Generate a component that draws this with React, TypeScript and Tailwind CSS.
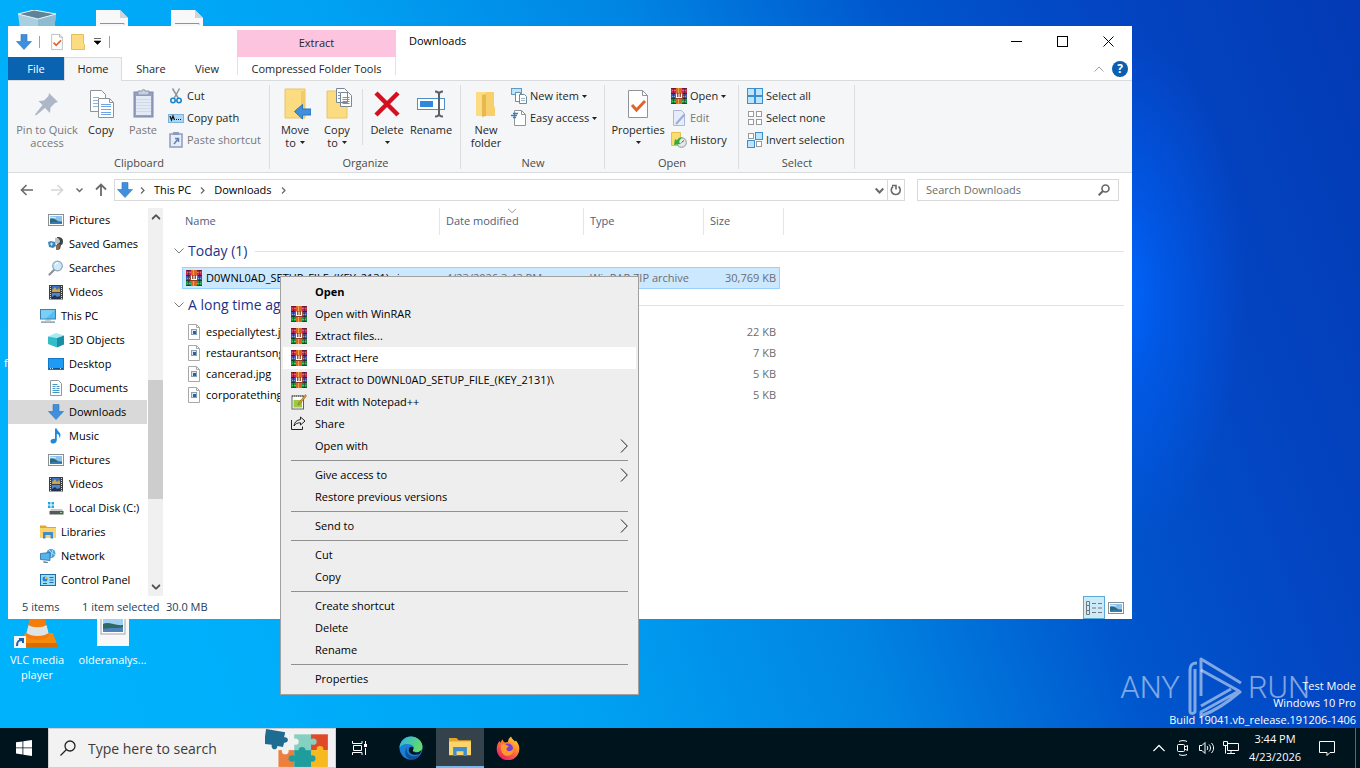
import { ReactNode } from "react";

type IconProps = { className?: string };

/* ---------- shared icons ---------- */

const WinRar = () => (
  <svg width="16" height="16" viewBox="0 0 16 16" className="shrink-0">
    <rect y="0" width="16" height="5" fill="#c42a4e" />
    <rect y="0" width="16" height="1" fill="#7d1431" />
    <rect x="1" y="2" width="14" height="1" fill="#e8607c" />
    <rect y="5" width="16" height="6" fill="#4a4fb5" />
    <rect y="5" width="16" height="1" fill="#26205f" />
    <rect x="1" y="8" width="14" height="1" fill="#8e9be6" />
    <rect y="11" width="16" height="5" fill="#159a3e" />
    <rect y="10" width="16" height="1" fill="#14431f" />
    <rect x="1" y="13" width="14" height="1" fill="#54c46a" />
    <rect y="15" width="16" height="1" fill="#0b5a22" />
    <rect x="2" width="1" height="16" fill="#3a2340" opacity=".6" />
    <rect x="13" width="1" height="16" fill="#3a2340" opacity=".6" />
    <rect x="5" width="6" height="16" fill="#d9661f" />
    <rect x="7" width="1" height="16" fill="#f2a24e" />
    <rect x="4" y="5" width="8" height="6" fill="#8a3b2b" />
    <path d="M5.500 5.500v4h5v-4M8 5.500v4" fill="none" stroke="#fff" strokeWidth="1.200" />
  </svg>
);

const DownArrow = ({ className = "size-4" }: IconProps) => (
  <svg viewBox="0 0 16 16" className={"shrink-0 " + className}>
    <path d="M5 0.500h6v7h4.500L8 15.500 0.500 7.500H5z" fill="#3f8fdc" stroke="#2b74bd" strokeWidth=".6" />
  </svg>
);

const PictureIcon = () => (
  <svg width="16" height="16" viewBox="0 0 16 16" className="shrink-0">
    <rect x=".5" y="2.500" width="15" height="11" fill="#fff" stroke="#8a8f94" />
    <rect x="2" y="4" width="12" height="8" fill="#8cc3ee" />
    <path d="M2 7c3-1 5 0 7 1.500s4 1 5 1V12H2z" fill="#2d6b6f" />
    <path d="M2 10.500c4-1 8-.5 12 .3V12H2z" fill="#3c79c2" />
    <path d="M2 5.500c2-1 4 .5 6 .2" stroke="#e8f4fd" fill="none" />
  </svg>
);

const GamesIcon = () => (
  <svg width="16" height="16" viewBox="0 0 16 16" className="shrink-0">
    <path d="M9 1c3-.5 6 1 6 4s-1 4-2 4l-1 4-3 1V9z" fill="#39434b" />
    <path d="M7 2c3-1 5 1 5 4l-2 2-3-1z" fill="#b8c2c9" />
    <path d="M8 9l4-1-1 6H8z" fill="#8b6a4e" />
    <path d="M0 6l3-1 4 1 1 4-3 2-4-1z" fill="#3b87bd" />
    <path d="M2 8h3M3.500 6.500v3" stroke="#cfe8f8" />
  </svg>
);

const GlassIcon = () => (
  <svg width="16" height="16" viewBox="0 0 16 16" className="shrink-0">
    <path d="M6.500 9.500L1.500 14.500" stroke="#8b9299" strokeWidth="2.200" strokeLinecap="round" />
    <circle cx="9.500" cy="6" r="4.800" fill="#cfe9f9" stroke="#8ba6b8" strokeWidth="1.200" />
    <path d="M7 5a3 3 0 0 1 3-2.200" stroke="#fff" fill="none" />
  </svg>
);

const VideoIcon = () => (
  <svg width="16" height="16" viewBox="0 0 16 16" className="shrink-0">
    <rect x="1" y="1" width="14" height="14.500" fill="#3d3f42" />
    <path d="M2.500 2v13M13.500 2v13" stroke="#d8dadc" strokeDasharray="1 1" />
    <rect x="4" y="2" width="8" height="6" fill="#3a6fc0" />
    <path d="M4 6l3-3 2 3 2-2 1 2v2H4z" fill="#caa64a" />
    <rect x="4" y="9" width="8" height="6" fill="#4f86cf" />
    <path d="M4 13l3-2 2 2 3-1v3H4z" fill="#20324f" />
  </svg>
);

const PcIcon = () => (
  <svg width="16" height="16" viewBox="0 0 16 16" className="shrink-0">
    <rect x=".5" y="1.500" width="15" height="9.500" fill="#55bdf2" stroke="#3d7fae" />
    <path d="M1 2h14L6 10.500H1z" fill="#8bd7fa" opacity=".7" />
    <rect x="5" y="11.500" width="6" height="1" fill="#8fa4b2" />
    <rect x="1" y="13.500" width="14" height="1.200" fill="#6f8797" />
  </svg>
);

const CubeIcon = () => (
  <svg width="16" height="16" viewBox="0 0 16 16" className="shrink-0">
    <path d="M0 4.500L8 1l8 2.500L9 6z" fill="#a4ecf2" />
    <path d="M0 4.500L9 6v9.500L0 12z" fill="#33bcc9" />
    <path d="M16 3.500L9 6v9.500l7-3z" fill="#1a8fa3" />
  </svg>
);

const DesktopIcon = () => (
  <svg width="16" height="16" viewBox="0 0 16 16" className="shrink-0">
    <rect x=".5" y="2.500" width="15" height="11" fill="#1e9bf5" stroke="#1277c9" />
    <rect x="1" y="12" width="14" height="1" fill="#0b4f94" />
    <path d="M2 12.500h3M12 12.500h2" stroke="#cfe6fb" strokeDasharray="1 1" />
  </svg>
);

const DocIcon = () => (
  <svg width="16" height="16" viewBox="0 0 16 16" className="shrink-0">
    <path d="M2.500 .5h8l3 3v12h-11z" fill="#fff" stroke="#8f979d" />
    <path d="M4.500 4.500h5M4.500 6.500h7M4.500 8.500h7M4.500 10.500h7M4.500 12.500h7" stroke="#4196c4" />
    <path d="M8 6v4" stroke="#fff" />
  </svg>
);

const MusicIcon = () => (
  <svg width="16" height="16" viewBox="0 0 16 16" className="shrink-0">
    <path d="M7 .5h1.800c.4 3 3.700 3.500 3.700 6.500 0 1.500-.7 2.500-1.300 3 .6-2.500-.8-3.800-2.400-4.200V12c0 2-1.500 3.500-3.300 3.500S2.500 14.600 2.500 13.200 4 10.500 7 10.700z" fill="#1e88dd" />
  </svg>
);

const DiskIcon = () => (
  <svg width="16" height="16" viewBox="0 0 16 16" className="shrink-0">
    <path d="M0 2h2.500v2.500H0zM3.500 2H6v2.500H3.500zM0 5.500h2.500V8H0zM3.500 5.500H6V8H3.500z" fill="#20a8e0" />
    <path d="M3 9h11l1 2H2z" fill="#c3c8cc" />
    <rect x="1.500" y="11" width="14" height="3.500" fill="#54595d" />
    <rect x="12" y="12" width="2" height="1" fill="#8be36c" />
  </svg>
);

const LibraryIcon = ({ className = "size-4" }: IconProps) => (
  <svg viewBox="0 0 16 16" className={"shrink-0 " + className}>
    <path d="M0 1.500h5.500l1.500 1.500h9v3H0z" fill="#e5a52c" />
    <path d="M0 4h16v10H0z" fill="#fbd56b" />
    <path d="M3 8h10v6.500h-2.500V11h-5v3.500H3z" fill="#3f8dcf" />
  </svg>
);

const NetworkIcon = () => (
  <svg width="16" height="16" viewBox="0 0 16 16" className="shrink-0">
    <circle cx="11" cy="5.500" r="4.500" fill="#4fa3d6" />
    <path d="M9 2l3 3-1 4M13 2l-1 3 3 2" stroke="#a8dcf5" fill="none" />
    <path d="M.5 5.500l9.500-1v8l-9.500-1z" fill="#56b4ec" stroke="#2a6fa3" strokeWidth=".8" />
    <path d="M3 13l5 1v1H4z" fill="#6e8999" />
  </svg>
);

const ControlIcon = () => (
  <svg width="16" height="16" viewBox="0 0 16 16" className="shrink-0">
    <rect x=".5" y="2.500" width="15" height="11" fill="#9bdcfb" stroke="#1f6ea8" />
    <circle cx="5" cy="7" r="2.500" fill="#1f8bd0" />
    <path d="M5 7V4.500A2.500 2.500 0 0 1 7.500 7z" fill="#f7b733" />
    <path d="M9.500 5.500h4M9.500 8h4M9.500 10.500h4M3 11.500h4" stroke="#1a6fae" />
  </svg>
);

const FileIcon = () => (
  <svg width="16" height="16" viewBox="0 0 16 16" className="shrink-0">
    <path d="M2.500 .5h8l3 3v12h-11z" fill="#fff" stroke="#a8a8a8" />
    <path d="M10.500 .5v3h3" fill="none" stroke="#a8a8a8" />
    <rect x="5.500" y="5.500" width="5" height="5" fill="#dbe9f4" stroke="#8aa0b3" />
    <path d="M7 7h3v3H7z" fill="#2f6296" />
  </svg>
);

const NotepadIcon = () => (
  <svg width="16" height="16" viewBox="0 0 16 16" className="shrink-0">
    <rect x="1" y="2" width="11.500" height="13" fill="#fff" stroke="#5d6259" />
    <path d="M1 2h11" stroke="#444" strokeDasharray="1 1" />
    <rect x="2.500" y="6" width="8.500" height="7.500" fill="#98cc3c" />
    <path d="M14.500 0.500L7.500 9l-.5 2 2-1 6.500-8z" fill="#e49b2f" stroke="#7a5320" strokeWidth=".5" />
  </svg>
);

const ShareIcon = () => (
  <svg width="16" height="16" viewBox="0 0 16 16" className="shrink-0" fill="none" stroke="#222">
    <path d="M.5 4v9.500h11v-3" />
    <path d="M9.500 1L14 5l-4.500 4V6.800C6.500 6.800 4.500 7.500 3 10c.3-3.500 2.500-6 6.500-6.500z" />
  </svg>
);

const Caret = () => (
  <svg width="5" height="3" viewBox="0 0 5 3" className="shrink-0">
    <path d="M0 0h5L2.500 3z" fill="#222" />
  </svg>
);

const Chevron = ({ className = "" }: IconProps) => (
  <svg width="10" height="6" viewBox="0 0 10 6" className={"shrink-0 " + className} fill="none" stroke="currentColor">
    <path d="M0.500 0.500L5 5l4.500-4.500" />
  </svg>
);

/* ---------- ribbon icons ---------- */

const PinIcon = () => (
  <svg width="32" height="32" viewBox="0 0 32 32">
    <path d="M18 5l9 9-3 1-4.500 4.500-.5 5.500-5-5L5 27.500l-1-1L11.500 17l-4-4 5.500-.5L17.500 8z" fill="#aeb7c8" />
  </svg>
);

const CopyIcon = () => (
  <svg width="32" height="32" viewBox="0 0 32 32" fill="#fff" stroke="#8b929b">
    <path d="M5.500 2.500h11l4 4v17h-15z" />
    <path d="M8 9.500h6M8 12.500h6M8 15.500h6M8 18.500h5" stroke="#86b3ea" />
    <path d="M13.500 10.500h11l4 4v15h-15z" />
    <path d="M24.500 10.500v4h4" fill="none" />
    <path d="M16 16.500h10M16 18.500h10M16 21.500h10M16 24.500h10M16 26.500h10" stroke="#6fa3e6" />
  </svg>
);

const PasteIcon = () => (
  <svg width="32" height="32" viewBox="0 0 32 32">
    <rect x="7" y="4" width="19" height="25" fill="#94a2be" stroke="#7d8bab" />
    <rect x="9" y="8" width="15" height="19" fill="#e3e9f5" />
    <path d="M9 11.500h15M9 14.500h15M9 17.500h15M9 20.500h15M9 23.500h15" stroke="#d0d9ec" />
    <path d="M11 3h4a1.500 1.500 0 0 1 3 0h4v4H11z" fill="#c6cfdf" stroke="#8996b2" />
  </svg>
);

const MoveToIcon = () => (
  <svg width="32" height="32" viewBox="0 0 32 32">
    <path d="M6 1h16l4 0v29H6z" fill="#fbdc81" stroke="#e9c466" />
    <path d="M22 3h4v27h-4z" fill="#f3ca65" />
    <path d="M15.500 23.500l8-7v4.500H32v6h-8.500v4z" fill="#3f8fdc" stroke="#2b74bd" />
  </svg>
);

const CopyToIcon = () => (
  <svg width="32" height="32" viewBox="0 0 32 32">
    <path d="M6 3h20v27H6z" fill="#fbdc81" stroke="#e9c466" />
    <path d="M15.500 .5h8l3 3v11h-11zM19.500 4.500h8l3 3v11h-11z" fill="#fff" stroke="#7d8790" />
    <path d="M21.500 9.500h7M21.500 11.500h7M21.500 13.500h7M21.500 15.500h7M17 4.500h2M17 7.500h2M17 10.500h2" stroke="#5e97e0" />
  </svg>
);

const DeleteIcon = () => (
  <svg width="32" height="32" viewBox="0 0 32 32" fill="none">
    <path d="M5 5l22 22M27 5L5 27" stroke="#d40f1f" strokeWidth="4.500" />
  </svg>
);

const RenameIcon = () => (
  <svg width="32" height="32" viewBox="0 0 32 32" fill="none">
    <rect x="2.500" y="10.500" width="27" height="11" fill="#fff" stroke="#4f8fc7" />
    <rect x="5" y="13" width="13" height="6" fill="#2f87de" />
    <path d="M20 3.500c3 0 4 1 4 3v19c0 2-1 3-4 3M28 3.500c-3 0-4 1-4 3v19c0 2 1 3 4 3" stroke="#5c6166" strokeWidth="2" />
  </svg>
);

const NewFolderIcon = () => (
  <svg width="32" height="32" viewBox="0 0 32 32">
    <path d="M6 4h17v24H6z" fill="#fbdc81" />
    <path d="M12 7l4-1v22l-4 1z" fill="#e6b850" />
    <path d="M16 4h8v14l1 2v8h-9z" fill="#f7d06c" />
  </svg>
);

const PropertiesIcon = ({ className = "size-8" }: IconProps) => (
  <svg viewBox="0 0 32 32" className={className} fill="none">
    <path d="M6.500 2.500h14l5 5v22h-19z" fill="#fff" stroke="#8f9498" />
    <path d="M20.500 2.500v5h5" stroke="#8f9498" />
    <path d="M10 17l4.500 5L23 13" stroke="#e0652a" strokeWidth="3" />
  </svg>
);

const CutIcon = () => (
  <svg width="16" height="16" viewBox="0 0 16 16" fill="none">
    <path d="M4.500 .5l6 10M11.500 .5l-5.500 10" stroke="#8c969e" strokeWidth="1.500" />
    <circle cx="5" cy="12.500" r="2.200" stroke="#1c86c9" strokeWidth="1.600" />
    <circle cx="11" cy="12.500" r="2.200" stroke="#1c86c9" strokeWidth="1.600" />
  </svg>
);

const CopyPathIcon = () => (
  <svg width="16" height="16" viewBox="0 0 16 16" fill="none">
    <rect x=".5" y="4.500" width="15" height="8" fill="#a9d7f7" stroke="#7fb2d9" />
    <path d="M2 6l1.500 4L5 6l1.500 4" stroke="#111" strokeWidth="1.200" />
    <path d="M8 9.500h6" stroke="#111" strokeDasharray="1 1" />
  </svg>
);

const PasteShortcutIcon = () => (
  <svg width="16" height="16" viewBox="0 0 16 16" fill="none">
    <rect x="2" y="2" width="12" height="13" fill="#e7ecf6" stroke="#8d9cbc" strokeWidth="1.500" />
    <rect x="5" y="0" width="6" height="3" fill="#8d9cbc" />
    <path d="M6 12l4-5M7 6.500h3.500V10" stroke="#6381b8" strokeWidth="1.500" />
  </svg>
);

const NewItemIcon = () => (
  <svg width="16" height="16" viewBox="0 0 16 16" fill="#fff" stroke="#6e8a9e">
    <rect x=".5" y=".5" width="10" height="6" fill="#bfe3f8" stroke="#5d9cc4" />
    <path d="M4.500 4.500h5v9h-5z" />
    <path d="M8.500 6.500h5l2 2v7h-7z" />
    <path d="M10 10.500h4M10 12.500h4" stroke="#9db6c7" />
  </svg>
);

const EasyAccessIcon = () => (
  <svg width="16" height="16" viewBox="0 0 16 16" fill="none">
    <path d="M3.500 .5h7l4 4v11h-11z" fill="#fff" stroke="#8f9498" />
    <path d="M10.500 .5v4h4" stroke="#8f9498" />
    <path d="M2 3.500h5M0 5.500h6M2 7.500h3" stroke="#2f7fc4" strokeWidth="1.300" />
  </svg>
);

const EditIcon = () => (
  <svg width="16" height="16" viewBox="0 0 16 16" fill="none">
    <path d="M2.500 .5h8l3 3v12h-11z" fill="#e6edfa" stroke="#aab9da" />
    <path d="M5 14l8.500-9.500" stroke="#9fb0d6" strokeWidth="2.200" />
  </svg>
);

const HistoryIcon = () => (
  <svg width="16" height="16" viewBox="0 0 16 16" fill="none">
    <path d="M.5 .5h9v13h-9z" fill="#fbdc6e" stroke="#e4bf4e" />
    <circle cx="10.500" cy="10.500" r="4.800" fill="#e5e9ea" stroke="#8b9397" />
    <path d="M10.500 10.500l2.500-2" stroke="#555" />
    <path d="M3 13l1-6 2 1.500C7.500 6 10 5.500 11.500 6 8.500 7 8 9 8.500 11l2 .8z" fill="#2fae3c" />
  </svg>
);

const tile = (x: number, y: number, on: boolean) => (
  <rect
    key={x + "-" + y}
    x={x}
    y={y}
    width={on ? 7 : 5}
    height={on ? 7 : 5}
    fill={on ? "#bfe5fc" : "#fff"}
    stroke={on ? "#3a8fd0" : "#9a9a9a"}
  />
);

const SelectAllIcon = () => (
  <svg width="16" height="16" viewBox="0 0 16 16">
    {tile(0.5, 0.5, true)}
    {tile(8.5, 0.5, true)}
    {tile(0.5, 8.5, true)}
    {tile(8.5, 8.5, true)}
  </svg>
);
const SelectNoneIcon = () => (
  <svg width="16" height="16" viewBox="0 0 16 16">
    {tile(1.5, 1.5, false)}
    {tile(9.5, 1.5, false)}
    {tile(1.5, 9.5, false)}
    {tile(9.5, 9.5, false)}
  </svg>
);
const InvertIcon = () => (
  <svg width="16" height="16" viewBox="0 0 16 16">
    {tile(1.5, 1.5, false)}
    {tile(8.5, 0.5, true)}
    {tile(0.5, 8.5, true)}
    {tile(9.5, 9.5, false)}
  </svg>
);

/* ---------- ribbon parts ---------- */

function BigButton({ icon, lines, caret, dim, className }: { icon: ReactNode; lines: string[]; caret?: boolean; dim?: boolean; className: string }) {
  return (
    <button className={"flex flex-col items-center gap-[3px] pt-[7px] leading-[13px] " + (dim ? "text-[#777] " : "text-[#262626] ") + className}>
      {icon}
      <span className="flex flex-col items-center whitespace-nowrap">
        {lines.map((line, i) => (
          <span key={line} className="flex items-center gap-1">
            {line}
            {caret && i > 0 && <Caret />}
          </span>
        ))}
        {caret && lines.length === 1 && (
          <span className="flex h-3 items-center">
            <Caret />
          </span>
        )}
      </span>
    </button>
  );
}

function SmallButton({ icon, label, caret, dim }: { icon: ReactNode; label: string; caret?: boolean; dim?: boolean }) {
  return (
    <button className={"flex h-[22px] items-center gap-[3px] whitespace-nowrap " + (dim ? "text-[#777]" : "text-[#262626]")}>
      {icon}
      <span>{label}</span>
      {caret && <Caret />}
    </button>
  );
}

function Group({ label, className, children }: { label: string; className: string; children: ReactNode }) {
  return (
    <section className={"relative flex shrink-0 flex-col px-1 " + className}>
      <div className="flex h-[73px] items-start">{children}</div>
      <h2 className="text-center leading-[18px] text-[#4a4a4a]">{label}</h2>
      <span className="absolute top-1 right-0 h-[84px] w-px bg-[#dcdddf]" />
    </section>
  );
}

function Ribbon() {
  return (
    <div className="flex h-[93px] shrink-0 overflow-hidden border-y border-[#dadbdc] bg-[#f5f6f7]">
      <Group label="Clipboard" className="w-[262px]">
        <BigButton icon={<PinIcon />} lines={["Pin to Quick", "access"]} dim className="ml-[2px] w-[66px]" />
        <BigButton icon={<CopyIcon />} lines={["Copy"]} className="w-[42px]" />
        <BigButton icon={<PasteIcon />} lines={["Paste"]} dim className="w-[42px]" />
        <div className="flex flex-col pt-1 pl-1">
          <SmallButton icon={<CutIcon />} label="Cut" />
          <SmallButton icon={<CopyPathIcon />} label="Copy path" />
          <SmallButton icon={<PasteShortcutIcon />} label="Paste shortcut" dim />
        </div>
      </Group>
      <Group label="Organize" className="w-[191px]">
        <BigButton icon={<MoveToIcon />} lines={["Move", "to"]} caret className="w-[42px]" />
        <BigButton icon={<CopyToIcon />} lines={["Copy", "to"]} caret className="w-[42px]" />
        <span className="mr-[3px] ml-1 mt-2 h-[56px] w-px bg-[#dcdddf]" />
        <BigButton icon={<DeleteIcon />} lines={["Delete"]} caret className="w-[42px]" />
        <BigButton icon={<RenameIcon />} lines={["Rename"]} className="w-[46px]" />
      </Group>
      <Group label="New" className="w-[144px]">
        <BigButton icon={<NewFolderIcon />} lines={["New", "folder"]} className="w-[42px]" />
        <div className="flex flex-col pt-1 pl-1">
          <SmallButton icon={<NewItemIcon />} label="New item" caret />
          <SmallButton icon={<EasyAccessIcon />} label="Easy access" caret />
        </div>
      </Group>
      <Group label="Open" className="w-[134px]">
        <BigButton icon={<PropertiesIcon />} lines={["Properties"]} caret className="w-[58px]" />
        <div className="flex flex-col pt-1 pl-1">
          <SmallButton icon={<WinRar />} label="Open" caret />
          <SmallButton icon={<EditIcon />} label="Edit" dim />
          <SmallButton icon={<HistoryIcon />} label="History" />
        </div>
      </Group>
      <Group label="Select" className="w-[116px]">
        <div className="flex flex-col pt-1 pl-1">
          <SmallButton icon={<SelectAllIcon />} label="Select all" />
          <SmallButton icon={<SelectNoneIcon />} label="Select none" />
          <SmallButton icon={<InvertIcon />} label="Invert selection" />
        </div>
      </Group>
    </div>
  );
}

function Header() {
  return (
    <header className="relative z-10 -mb-px flex h-[55px] shrink-0">
      <div className="flex w-[229px] shrink-0 flex-col">
        <div className="flex h-[31px] items-center pl-2 text-gray-500">
          <DownArrow />
          <span className="ml-[7px] h-3 w-px bg-gray-400" />
          <button aria-label="Properties" className="ml-2">
            <PropertiesIcon className="size-[18px]" />
          </button>
          <button aria-label="New folder" className="ml-1">
            <svg width="16" height="16" viewBox="0 0 16 16">
              <path d="M1.500 .5h12v9l1 1v5h-13z" fill="#fbdc81" stroke="#e3be5a" />
            </svg>
          </button>
          <button aria-label="Customize Quick Access Toolbar" className="ml-1 p-1 text-black">
            <svg width="7" height="7" viewBox="0 0 7 7">
              <path d="M0 .5h7M0 3h7L3.500 6.500z" fill="#000" stroke="#000" strokeWidth=".6" />
            </svg>
          </button>
          <span className="ml-1 h-3 w-px bg-gray-400" />
        </div>
        <nav className="flex h-6 text-[#262626]">
          <button className="mb-px w-14 bg-[#0a63b1] pt-px text-white">File</button>
          <button className="w-[58px] border-x border-t border-[#dadbdc] bg-[#f5f6f7]">Home</button>
          <button className="w-[58px]">Share</button>
          <button className="w-[54px]">View</button>
        </nav>
      </div>
      <div className="flex w-[159px] shrink-0 flex-col pt-1 text-[#262626]">
        <div className="flex h-[27px] items-center justify-center bg-[#fcc4de]">Extract</div>
        <button className="h-[18px] border-x border-[#e3e3e3] pt-[5px] leading-[14px]">Compressed Folder Tools</button>
      </div>
      <div className="flex flex-1 flex-col">
        <div className="flex h-[31px] items-center pr-px">
          <h1 className="flex-1 pl-[13px]">Downloads</h1>
          <button aria-label="Minimize" className="flex w-[46px] justify-center">
            <svg width="11" height="11" stroke="#000">
              <path d="M0 5.500h11" />
            </svg>
          </button>
          <button aria-label="Maximize" className="flex w-[46px] justify-center">
            <svg width="11" height="11" fill="none" stroke="#000">
              <rect x=".5" y=".5" width="10" height="10" />
            </svg>
          </button>
          <button aria-label="Close" className="flex w-[46px] justify-center">
            <svg width="11" height="11" stroke="#000">
              <path d="M.5 .5l10 10M10.500 .5l-10 10" />
            </svg>
          </button>
        </div>
        <div className="flex h-[23px] items-center justify-end gap-2 pr-1">
          <button aria-label="Minimize the Ribbon" className="text-[#a0a0a0]">
            <Chevron className="rotate-180" />
          </button>
          <button aria-label="Help" className="flex size-4 items-center justify-center rounded-full bg-[#0a5fb0] text-[12px] leading-none font-bold text-white">
            ?
          </button>
        </div>
      </div>
    </header>
  );
}

const Crumb = () => (
  <svg width="5" height="7" viewBox="0 0 5 7" fill="none" stroke="#666" strokeWidth="1.200" className="shrink-0">
    <path d="M1 .5l3 3-3 3" />
  </svg>
);

function AddressBar() {
  return (
    <div className="flex shrink-0 items-center pt-[6px] pr-[13px] pb-[7px] pl-3">
      <div className="flex w-[94px] shrink-0 items-center text-[#6a6a6a]">
        <button aria-label="Back">
          <svg width="14" height="12" viewBox="0 0 14 12" fill="none" stroke="currentColor" strokeWidth="1.600">
            <path d="M13 6H2M6.500 1L1.500 6l5 5" />
          </svg>
        </button>
        <button aria-label="Forward" className="ml-4 text-[#d6d6d6]">
          <svg width="14" height="12" viewBox="0 0 14 12" fill="none" stroke="currentColor" strokeWidth="1.600">
            <path d="M1 6h11M7.500 1l5 5-5 5" />
          </svg>
        </button>
        <button aria-label="Recent locations" className="ml-3">
          <svg width="7" height="5" viewBox="0 0 7 5" fill="none" stroke="currentColor" strokeWidth="1.500">
            <path d="M.5 .5l3 3 3-3" />
          </svg>
        </button>
        <button aria-label="Up" className="ml-3">
          <svg width="12" height="14" viewBox="0 0 12 14" fill="none" stroke="currentColor" strokeWidth="1.800">
            <path d="M6 13V2M1 6.500l5-5 5 5" />
          </svg>
        </button>
      </div>
      <div className="flex h-[22px] flex-1 items-center border border-[#d9d9d9] pl-[2px]">
        <DownArrow />
        <div className="flex flex-1 items-center gap-[9px] pl-[7px] text-black">
          <Crumb />
          <button>This PC</button>
          <Crumb />
          <button>Downloads</button>
          <Crumb />
        </div>
        <button aria-label="Previous locations" className="px-[3px] text-[#6a6a6a]">
          <svg width="9" height="7" viewBox="0 0 9 7" fill="none" stroke="currentColor" strokeWidth="2">
            <path d="M.7 1.500l3.800 4 3.800-4" />
          </svg>
        </button>
        <button aria-label="Refresh" className="flex h-full w-[17px] items-center justify-center border-l border-[#d9d9d9] text-[#6a6a6a]">
          <svg width="12" height="12" viewBox="0 0 12 12" fill="none" stroke="currentColor" strokeWidth="1.600">
            <path d="M3 2.500A4.500 4.500 0 1 0 8.500 2.500" />
            <path d="M2 1.500h4v4" />
          </svg>
        </button>
      </div>
      <label className="ml-3 flex h-[22px] w-[202px] items-center border border-[#d9d9d9] pr-2 pl-2">
        <input type="text" aria-label="Search Downloads" placeholder="Search Downloads" className="w-0 flex-1 outline-none placeholder:text-[#6d6d6d]" />
        <svg width="12" height="12" viewBox="0 0 12 12" fill="none" stroke="#666" strokeWidth="1.600">
          <circle cx="7.500" cy="4.500" r="3.500" />
          <path d="M5 7L.7 11.300" strokeWidth="2" />
        </svg>
      </label>
    </div>
  );
}

const tree: { label: string; icon: ReactNode; top?: boolean; active?: boolean }[] = [
  { label: "Pictures", icon: <PictureIcon /> },
  { label: "Saved Games", icon: <GamesIcon /> },
  { label: "Searches", icon: <GlassIcon /> },
  { label: "Videos", icon: <VideoIcon /> },
  { label: "This PC", icon: <PcIcon />, top: true },
  { label: "3D Objects", icon: <CubeIcon /> },
  { label: "Desktop", icon: <DesktopIcon /> },
  { label: "Documents", icon: <DocIcon /> },
  { label: "Downloads", icon: <DownArrow />, active: true },
  { label: "Music", icon: <MusicIcon /> },
  { label: "Pictures", icon: <PictureIcon /> },
  { label: "Videos", icon: <VideoIcon /> },
  { label: "Local Disk (C:)", icon: <DiskIcon /> },
  { label: "Libraries", icon: <LibraryIcon />, top: true },
  { label: "Network", icon: <NetworkIcon />, top: true },
  { label: "Control Panel", icon: <ControlIcon />, top: true },
];

function Sidebar() {
  return (
    <aside className="flex shrink-0">
      <ul className="w-[139px]">
        {tree.map((item, i) => (
          <li key={i}>
            <button
              className={
                "flex h-6 w-full items-center gap-[5px] whitespace-nowrap text-black " +
                (item.top ? "pl-8 " : "pl-10 ") +
                (item.active ? "bg-[#d9d9d9]" : "")
              }
            >
              {item.icon}
              {item.label}
            </button>
          </li>
        ))}
      </ul>
      <div className="ml-px flex w-[15px] flex-col items-center bg-[#f0f0f0] py-[6px] text-[#505050]">
        <Chevron className="scale-90 rotate-180 stroke-2" />
        <div className="mt-40 h-[119px] w-full bg-[#cdcdcd]" />
        <Chevron className="mt-auto scale-90 stroke-2" />
      </div>
    </aside>
  );
}

const oldFiles = [
  { name: "especiallytest.jpg", size: "22 KB" },
  { name: "restaurantsong.jpg", size: "7 KB" },
  { name: "cancerad.jpg", size: "5 KB" },
  { name: "corporatething.jpg", size: "5 KB" },
];

function GroupRow({ label }: { label: string }) {
  return (
    <tr className="h-8">
      <td colSpan={7}>
        <div className="flex items-center gap-2 pr-2 pl-[11px]">
          <Chevron className="text-[#777]" />
          <span className="-ml-1 text-[14px] leading-5 text-[#1e3287]">{label}</span>
          <span className="h-px flex-1 bg-[#e2e2e2]" />
        </div>
      </td>
    </tr>
  );
}

function FileTable() {
  return (
    <div className="min-w-0 flex-1">
      <table className="w-full table-fixed border-separate border-spacing-0 text-left whitespace-nowrap">
        <colgroup>
          <col className="w-[19px]" />
          <col className="w-[258px]" />
          <col className="w-[144px]" />
          <col className="w-[120px]" />
          <col className="w-[76px]" />
          <col className="w-1" />
          <col />
        </colgroup>
        <thead className="text-[#4c607a]">
          <tr className="h-[27px]">
            <td />
            <th className="border-r border-[#e5e5e5] pl-[3px] font-normal">Name</th>
            <th className="relative border-r border-[#e5e5e5] pl-[6px] font-normal">
              Date modified
              <Chevron className="absolute top-0 left-[67px] scale-90 text-[#888]" />
            </th>
            <th className="border-r border-[#e5e5e5] pl-[6px] font-normal">Type</th>
            <th className="pl-[6px] font-normal">Size</th>
            <td className="border-r border-[#e5e5e5]" />
            <td />
          </tr>
        </thead>
        <tbody className="text-[#6d6d6d]">
          <GroupRow label="Today (1)" />
          <tr className="h-[22px] leading-4">
            <td />
            <td className="overflow-hidden border-y border-l border-[#99d1ff] bg-[#cce8ff] pl-[3px] text-black">
              <span className="flex items-center gap-1">
                <WinRar />
                D0WNL0AD_SETUP_FILE_(KEY_2131).zip
              </span>
            </td>
            <td className="border-y border-[#99d1ff] bg-[#cce8ff] pl-[6px]">4/23/2026 3:43 PM</td>
            <td className="border-y border-[#99d1ff] bg-[#cce8ff] pl-[6px]">WinRAR ZIP archive</td>
            <td className="border-y border-r border-[#99d1ff] bg-[#cce8ff] pr-[3px] text-right">30,769 KB</td>
          </tr>
          <GroupRow label="A long time ago (4)" />
          {oldFiles.map((file) => (
            <tr key={file.name} className="h-[21px] leading-4">
              <td />
              <td className="pl-1 text-black">
                <span className="flex items-center gap-1">
                  <FileIcon />
                  {file.name}
                </span>
              </td>
              <td />
              <td />
              <td className="pr-1 text-right">{file.size}</td>
            </tr>
          ))}
        </tbody>
      </table>
    </div>
  );
}

function Explorer() {
  return (
    <main className="absolute top-[26px] right-[228px] left-2 flex flex-col bg-white">
      <Header />
      <Ribbon />
      <AddressBar />
      <div className="flex h-[388px]">
        <Sidebar />
        <FileTable />
      </div>
      <footer className="flex h-[23px] items-center pr-2 pl-[14px] text-[#1e3c5a]">
        <span className="w-[60px]">5 items</span>
        <span className="w-[84px] whitespace-nowrap">1 item selected</span>
        <span className="flex-1">30.0 MB</span>
        <button aria-label="Details view" className="mr-[3px] flex h-[23px] w-[22px] items-center justify-center border border-[#5aa9d6] bg-[#cdeaf9]">
          <svg width="16" height="14" viewBox="0 0 16 14" fill="none" stroke="#777">
            <path d="M.5 .5h3v13h-3zM.5 4.500h3M.5 9.500h3M6 2.500h4M12 2.500h4M6 7h4M12 7h4M6 11.500h4M12 11.500h4" />
          </svg>
        </button>
        <button aria-label="Large icons view">
          <PictureIcon />
        </button>
      </footer>
    </main>
  );
}

/* ---------- context menu ---------- */

type MenuItem = { label: string; icon?: ReactNode; bold?: boolean; sub?: boolean; active?: boolean };

const menu: MenuItem[][] = [
  [
    { label: "Open", bold: true },
    { label: "Open with WinRAR", icon: <WinRar /> },
    { label: "Extract files...", icon: <WinRar /> },
    { label: "Extract Here", icon: <WinRar />, active: true },
    { label: "Extract to D0WNL0AD_SETUP_FILE_(KEY_2131)\\", icon: <WinRar /> },
    { label: "Edit with Notepad++", icon: <NotepadIcon /> },
    { label: "Share", icon: <ShareIcon /> },
    { label: "Open with", sub: true },
  ],
  [{ label: "Give access to", sub: true }, { label: "Restore previous versions" }],
  [{ label: "Send to", sub: true }],
  [{ label: "Cut" }, { label: "Copy" }],
  [{ label: "Create shortcut" }, { label: "Delete" }, { label: "Rename" }],
  [{ label: "Properties" }],
];

function ContextMenu() {
  return (
    <div role="menu" className="absolute top-[276px] left-[280px] z-20 w-[359px] border border-[#a0a0a0] bg-[#eeeeee] px-[2px] py-1 text-black">
      {menu.map((items, i) => (
        <div key={i}>
          {i > 0 && <hr className="mx-2 my-[3px] border-[#919191]" />}
          {items.map((item) => (
            <button
              key={item.label}
              role="menuitem"
              className={"flex h-[22px] w-full items-center pr-2 pl-2 " + (item.active ? "bg-white " : "") + (item.bold ? "font-bold" : "")}
            >
              <span className="w-6">{item.icon}</span>
              <span className="flex-1 text-left whitespace-nowrap">{item.label}</span>
              {item.sub && (
                <svg width="8" height="14" viewBox="0 0 8 14" fill="none" stroke="#222">
                  <path d="M1 .5L7.300 7 1 13.500" />
                </svg>
              )}
            </button>
          ))}
        </div>
      ))}
    </div>
  );
}

/* ---------- desktop ---------- */

const BlankDoc = ({ picture }: { picture?: boolean }) => (
  <svg width="32" height="48" viewBox="0 0 32 48">
    <path d="M0 0h24l8 8v40H0z" fill="#f8f8f8" />
    <path d="M24 0v8h8z" fill="#cfd4d8" />
    <path d="M4 13.500h24v1" fill="none" stroke="#8495a5" />
    {picture && (
      <>
        <rect x="4" y="14" width="24" height="22" fill="#fff" stroke="#9aa5ad" />
        <rect x="6" y="16" width="20" height="18" fill="#9fd0f2" />
        <path d="M6 26c5-3 12 2 20 1v7H6z" fill="#2e6a63" />
        <path d="M6 31c6-2 14 0 20-2v5H6z" fill="#4f83bd" />
      </>
    )}
  </svg>
);

function DesktopItems() {
  return (
    <>
      <div className="absolute top-[10px] left-[18px]">
        <svg width="38" height="48" viewBox="0 0 38 48">
          <path d="M0 4L16 0l22 4-5 44H6z" fill="#a9cfe0" />
          <path d="M0 4L16 0l22 4-18 5z" fill="#5f8398" />
          <path d="M20 9l18-5-5 44H20z" fill="#8dbbd0" />
          <path d="M0 4L16 0l22 4-18 5z" fill="none" stroke="#e8f4f8" />
        </svg>
      </div>
      <div className="absolute top-[10px] left-24">
        <BlankDoc />
      </div>
      <div className="absolute top-[10px] left-[171px]">
        <BlankDoc />
      </div>
      <span className="absolute top-[355px] left-1 text-white">f</span>
      <button className="absolute top-[600px] left-0 flex w-[74px] flex-col items-center gap-1 text-white">
        <svg width="48" height="48" viewBox="0 0 48 48">
          <path d="M12 33h28l4 11H8z" fill="#f58a0b" />
          <path d="M8 43h36v4H8z" fill="#d96c00" />
          <path d="M20 2h8l8 34c-4 5-18 5-23 0z" fill="#f57c0a" />
          <path d="M15.500 25c4 3 14 3 18 0l2 8c-5 4-17 4-22 0z" fill="#dfe3e6" />
          <path d="M18 10h12l1.500 7c-4 2-11 2-15 0z" fill="#e9ecee" />
          <rect x="1" y="36" width="12" height="12" fill="#f4f6f8" />
          <path d="M4 46c0-4 1-6 5-6M6 39h4v4" fill="none" stroke="#1f5fae" strokeWidth="2" />
        </svg>
        <span className="text-center leading-[15px]">VLC media player</span>
      </button>
      <button className="absolute top-[598px] left-[75px] flex w-[75px] flex-col items-center gap-[6px] text-white">
        <BlankDoc picture />
        <span className="leading-[15px]">olderanalys...</span>
      </button>
    </>
  );
}

function Watermark() {
  return (
    <div className="absolute right-[50px] bottom-2 flex items-center font-['Roboto',sans-serif] text-[31px] leading-[60px] font-light text-white/50">
      <span>ANY</span>
      <svg width="56" height="64" viewBox="0 0 56 64" fill="none" stroke="#fff" strokeOpacity=".5" strokeWidth="3" strokeLinejoin="round" className="mr-1 ml-2">
        <path d="M9 7C4 7 2 9 2 14v41c0 3 3 3 5 1V13" />
        <path d="M53 27L13 3v37" />
        <path d="M13 14l38 21-38 21v4c14-5 26-13 40-25" />
        <path d="M13 50l30-17" />
      </svg>
      <span>RUN</span>
    </div>
  );
}

function BuildInfo() {
  return (
    <p className="absolute right-1 bottom-0 text-right leading-[17px] text-white">
      Test Mode
      <br />
      Windows 10 Pro
      <br />
      Build 19041.vb_release.191206-1406
    </p>
  );
}

/* ---------- taskbar ---------- */

const Puzzle = () => (
  <svg width="64" height="40" viewBox="3 1 57 38" preserveAspectRatio="none" className="shrink-0">
    <path d="M4 2l17 3-1 5c4-1 5 5 0 5l-1 4-5-1c0 5-6 4-5-1l-7-1z" fill="#1f6c92" />
    <path d="M15 22h14v16H15z" fill="#ec7f3d" />
    <path d="M29 7h15v15H29z" fill="#86d0c2" />
    <path d="M44 7h15v15H44z" fill="#e04a28" />
    <path d="M29 22h16v16H29z" fill="#1f9d9d" />
    <path d="M44 22h15v16H44z" fill="#f8b91f" />
    <circle cx="36" cy="22" r="3" fill="#1f9d9d" />
    <circle cx="46" cy="14" r="3" fill="#86d0c2" />
    <circle cx="52" cy="21" r="3" fill="#f8b91f" />
    <circle cx="27" cy="30" r="3" fill="#1f9d9d" />
    <circle cx="45" cy="30" r="3" fill="#1f9d9d" />
    <circle cx="21" cy="23" r="3" fill="#f2f2f2" />
    <circle cx="30" cy="14" r="3" fill="#f2f2f2" />
  </svg>
);

const Edge = () => (
  <svg width="24" height="24" viewBox="0 0 24 24">
    <defs>
      <linearGradient id="edgeTop" x1="0" y1="0" x2="1" y2=".4">
        <stop offset="0" stopColor="#2bb3e6" />
        <stop offset="1" stopColor="#62db6c" />
      </linearGradient>
    </defs>
    <circle cx="12" cy="12" r="11.500" fill="#1b7fd3" />
    <path d="M.5 12C1 5 6 .5 12 .5S23.500 5 23.500 11c0 3-2.500 5-5.500 5s-4.500-1.500-4-2.500c1-1 1-2 .5-3C13 7.500 3 6 .5 12z" fill="url(#edgeTop)" />
    <path d="M8.500 11C6 15 10 21.500 17 20c2-.4 3.500-1 4.500-2-2 4-6 6-10 5.500C6 22.500 4.500 15 8.500 11z" fill="#11509f" />
    <path d="M13.800 14c-.8 2.500 4 3 6 2l3-2-2 4c-6 2-11 0-11-4 0-3 2.500-4 4.500-2.500.4.800.2 1.700-.5 2.500z" fill="#001722" />
  </svg>
);

const Firefox = () => (
  <svg width="24" height="24" viewBox="0 0 24 24">
    <defs>
      <linearGradient id="fox" x1=".9" y1="0" x2=".2" y2="1">
        <stop offset="0" stopColor="#ffe226" />
        <stop offset=".5" stopColor="#ff7139" />
        <stop offset="1" stopColor="#e5186d" />
      </linearGradient>
    </defs>
    <path d="M15 .5c1 2.500 3 3.500 4 5l1-1c2 3 3.500 5 3.300 8.500A11.300 11.300 0 0 1 .7 13c0-3.500 1-6 3-8l.5 2C5 5 6 4 7 3.500c0 1.500.5 2.500 2 3L12 6c0-2 1-4 3-5.500z" fill="url(#fox)" />
    <circle cx="12" cy="12.500" r="5" fill="#7a3fd1" />
    <path d="M5 9c3-2 5-.5 6 .5 1.500 0 2 1 1 1.800-1.500.7-2 1.500-1 3 2 2 5 .5 6-1.500 1 5-3 7.500-6.500 7C6.500 19.300 4 14 5 9z" fill="#ff9a2b" />
  </svg>
);

function Taskbar() {
  return (
    <footer className="flex h-10 shrink-0 items-center bg-[#00141e] text-white">
      <button aria-label="Start" className="flex w-12 justify-center">
        <svg width="16" height="16" viewBox="0 0 16 16" fill="#fff">
          <path d="M0 2.300L6.500 1.400v6.100H0zM7.300 1.300L16 0v7.500H7.300zM0 8.300h6.500v6.200L0 13.600zM7.300 8.300H16V16l-8.700-1.300z" />
        </svg>
      </button>
      <label className="flex h-10 w-72 items-center border border-[#d0d0d0] bg-[#f2f2f2] pr-[6px] pl-[11px]">
        <svg width="16" height="16" viewBox="0 0 16 16" fill="none" stroke="#222" strokeWidth="1.300" className="shrink-0">
          <circle cx="10" cy="6" r="5" />
          <path d="M6.500 9.500L.5 15.500" />
        </svg>
        <input type="text" aria-label="Type here to search" placeholder="Type here to search" className="ml-3 w-0 flex-1 text-[14px] outline-none placeholder:text-[#3c3c3c]" />
        <Puzzle />
      </label>
      <button aria-label="Task View" className="flex w-12 justify-center">
        <svg width="16" height="16" viewBox="0 0 16 16" fill="none" stroke="#fff">
          <path d="M.5 1v2.500h9.500V1M.5 15v-2.500h9.500V15M1.500 5.500h8v5h-8zM13.500 1v3M13.500 8v7" />
          <rect x="12.500" y="4.500" width="2" height="2" fill="#fff" />
        </svg>
      </button>
      <button aria-label="Microsoft Edge" className="ml-[3px] flex w-12 justify-center">
        <Edge />
      </button>
      <button aria-label="File Explorer" className="ml-px flex h-10 w-12 items-center justify-center border-b-2 border-[#76b9ed] bg-[#33424b]">
        <LibraryIcon className="size-[22px]" />
      </button>
      <button aria-label="Firefox" className="flex w-12 justify-center">
        <Firefox />
      </button>
      <div className="ml-auto flex items-center">
        <button aria-label="Show hidden icons" className="w-6">
          <Chevron className="mx-auto scale-125 rotate-180" />
        </button>
        <button aria-label="Meet Now" className="w-6">
          <svg width="16" height="16" viewBox="0 0 16 16" fill="none" stroke="#fff" className="mx-auto">
            <rect x="2.500" y="4.500" width="7" height="7" rx="1" />
            <path d="M9.500 7l3-1.500v5L9.500 9M4 1.500c2.500-1.200 5.500-1.200 8 0M4 14.500c2.500 1.200 5.500 1.200 8 0" />
          </svg>
        </button>
        <button aria-label="Volume" className="w-6">
          <svg width="16" height="16" viewBox="0 0 16 16" fill="none" stroke="#fff" className="mx-auto">
            <path d="M.5 5.500h2.500l3-3v11l-3-3H.5zM8 6c1 1.200 1 2.800 0 4M10 4.500c2 2 2 5 0 7M12.500 3c2.800 3 2.800 7 0 10" />
          </svg>
        </button>
        <button aria-label="Network" className="w-6">
          <svg width="16" height="16" viewBox="0 0 16 16" fill="none" stroke="#fff" className="mx-auto">
            <path d="M4.500 3.500h11v7h-11zM.5 1.500h4v4h-4zM2.500 5.500v8M8 10.500v3M4 13.500h8" />
          </svg>
        </button>
        <time className="w-16 text-center leading-[18px]">
          3:44 PM
          <br />
          4/23/2026
        </time>
        <button aria-label="Notifications" className="w-10">
          <svg width="16" height="16" viewBox="0 0 16 16" fill="none" stroke="#fff" className="mx-auto">
            <path d="M.5 1.500h15v11H11l-3 3v-3H.5z" />
          </svg>
        </button>
        <span className="ml-2 h-10 w-px bg-[#5a666d]" />
        <span className="w-1" />
      </div>
    </footer>
  );
}

export default function App() {
  return (
    <div className="flex h-screen flex-col overflow-hidden font-['Open_Sans','Noto_Sans',sans-serif] text-[11px]">
      <div className="relative flex-1 bg-[radial-gradient(ellipse_130px_260px_at_82%_40%,#0066ff_0%,#0064ff80_40%,#0064ff00_100%),linear-gradient(70deg,#00b2fc_0%,#00b0fb_14%,#00a2f4_36%,#0084e2_55%,#0056cd_71%,#0345c2_84%,#033ab4_100%)]">
        <DesktopItems />
        <Explorer />
        <ContextMenu />
        <Watermark />
        <BuildInfo />
      </div>
      <Taskbar />
    </div>
  );
}
